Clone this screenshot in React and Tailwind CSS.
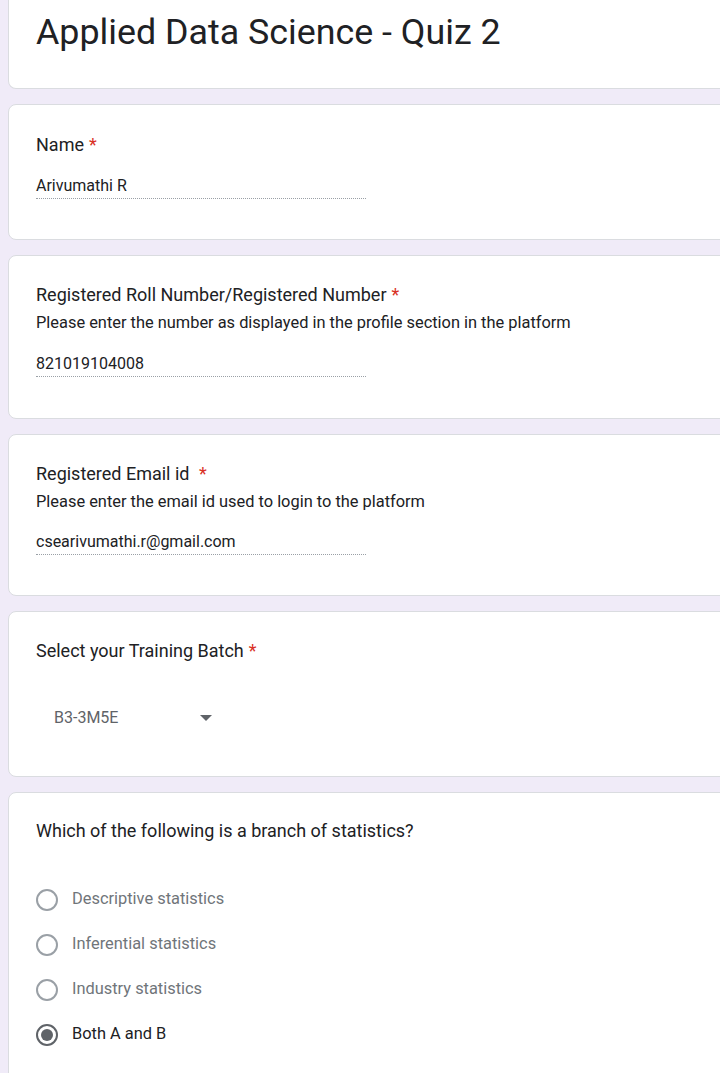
import React from "react";

function Req() {
  return <span className="text-[#d93025] ml-[5px]">*</span>;
}

function Card({ children, className = "" }) {
  return (
    <div className={"bg-white border border-[#dadce0] rounded-lg w-[740px] pl-[27px] " + className}>
      {children}
    </div>
  );
}

function TextAnswer({ value, mt }) {
  return (
    <div className={"w-[330px] border-b border-dotted border-[#9aa0a6] text-[16px] leading-[20px] pb-[2px] text-[#202124] " + mt}>
      {value}
    </div>
  );
}

function Radio({ label, checked }) {
  return (
    <div className="flex items-center h-[45px]">
      <div
        className={
          "w-[22px] h-[22px] rounded-full border-2 flex items-center justify-center " +
          (checked ? "border-[#5f6368]" : "border-[#9aa0a6]")
        }
      >
        {checked && <div className="w-[12px] h-[12px] rounded-full bg-[#5f6368]" />}
      </div>
      <span className={"ml-[14px] text-[16.4px] " + (checked ? "text-[#202124]" : "text-[#70757a]")}>{label}</span>
    </div>
  );
}

export default function App() {
  return (
    <div
      className="min-h-[1073px] bg-[#f0ebf8] pl-[8px] overflow-hidden flex flex-col gap-[15px]"
      style={{ fontFamily: "Roboto, 'Noto Sans', sans-serif" }}
    >
      <div className="bg-white border border-t-0 border-[#dadce0] rounded-b-lg w-[740px] pl-[27px] pt-[12px] pb-[36px]">
        <div className="text-[35.8px] leading-[40px] text-[#202124]">Applied Data Science - Quiz 2</div>
      </div>

      <Card className="pt-[28px] pb-[40px]">
        <div className="text-[18px] leading-[24px] text-[#202124]">
          Name<Req />
        </div>
        <TextAnswer value="Arivumathi R" mt="mt-[19px]" />
      </Card>

      <Card className="pt-[27px] pb-[41px]">
        <div className="text-[18px] leading-[24px] text-[#202124]">
          Registered Roll Number/Registered Number<Req />
        </div>
        <div className="mt-[6px] text-[16.4px] leading-[20px] text-[#202124]">
          Please enter the number as displayed in the profile section in the platform
        </div>
        <TextAnswer value="821019104008" mt="mt-[21px]" />
      </Card>

      <Card className="pt-[27px] pb-[40px]">
        <div className="text-[18px] leading-[24px] text-[#202124]">
          Registered Email id <span className="text-[#d93025] ml-[5px]">*</span>
        </div>
        <div className="mt-[6px] text-[16.4px] leading-[20px] text-[#202124]">
          Please enter the email id used to login to the platform
        </div>
        <TextAnswer value="csearivumathi.r@gmail.com" mt="mt-[20px]" />
      </Card>

      <Card className="pt-[27px] pb-[46px]">
        <div className="text-[18px] leading-[24px] text-[#202124]">
          Select your Training Batch<Req />
        </div>
        <div className="mt-[43px] flex items-center h-[24px] pl-[18px]">
          <span className="text-[16px] text-[#5f6368] w-[146px]">B3-3M5E</span>
          <svg width="12" height="6" viewBox="0 0 12 6">
            <path d="M0 0 L12 0 L6 6 Z" fill="#5f6368" />
          </svg>
        </div>
      </Card>

      <Card className="pt-[26px] pb-[40px] rounded-b-none">
        <div className="text-[18px] leading-[24px] text-[#202124]">
          Which of the following is a branch of statistics?
        </div>
        <div className="mt-[34px] flex flex-col">
          <Radio label="Descriptive statistics" />
          <Radio label="Inferential statistics" />
          <Radio label="Industry statistics" />
          <Radio label="Both A and B" checked />
        </div>
      </Card>
    </div>
  );
}
